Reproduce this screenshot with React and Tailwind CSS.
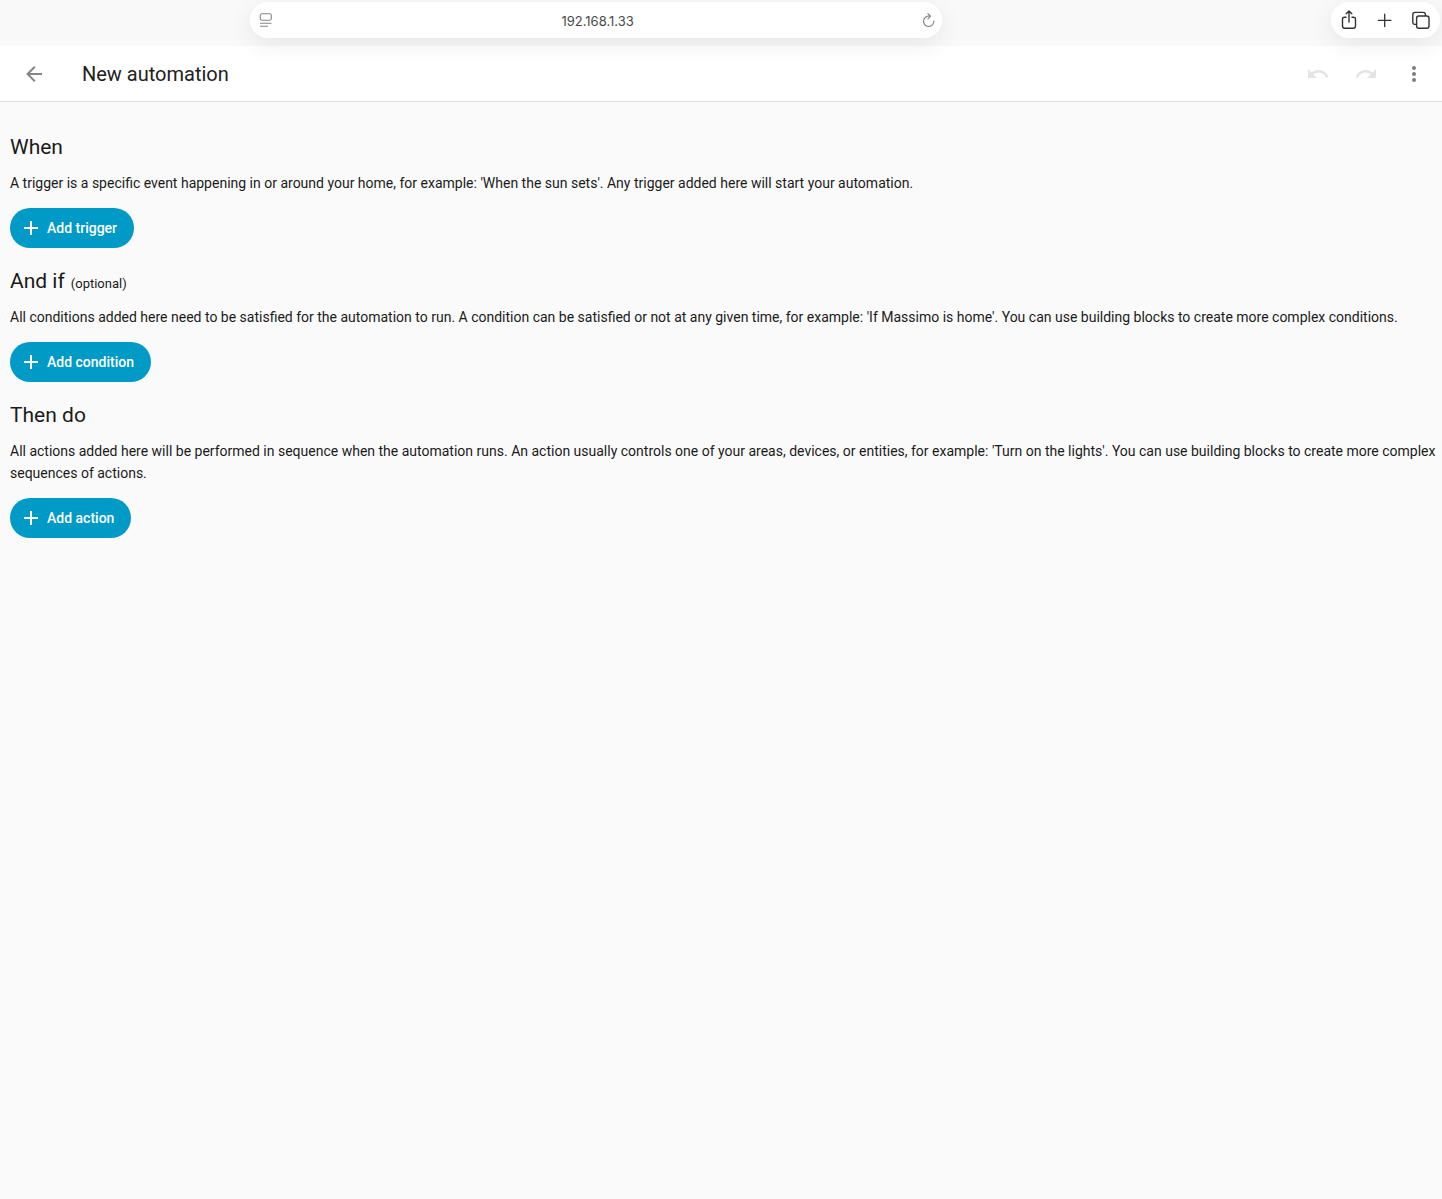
function Mdi({ d }) {
  return (
    <svg viewBox="0 0 24 24" className="size-6" fill="currentColor" aria-hidden="true">
      <path d={d} />
    </svg>
  );
}

const ARROW_LEFT = "M20,11V13H8L13.5,18.5L12.08,19.92L4.16,12L12.08,4.08L13.5,5.5L8,11H20Z";
const UNDO =
  "M12.5,8C9.85,8 7.45,9 5.6,10.6L2,7V16H11L7.38,12.38C8.77,11.22 10.54,10.5 12.5,10.5C16.04,10.5 19.05,12.81 20.1,16L22.47,15.22C21.08,11.03 17.15,8 12.5,8Z";
const REDO =
  "M18.4,10.6C16.55,9 14.15,8 11.5,8C6.85,8 2.92,11.03 1.54,15.22L3.9,16C4.95,12.81 7.95,10.5 11.5,10.5C13.45,10.5 15.23,11.22 16.62,12.38L13,16H22V7L18.4,10.6Z";
const DOTS =
  "M12,16A2,2 0 0,1 14,18A2,2 0 0,1 12,20A2,2 0 0,1 10,18A2,2 0 0,1 12,16M12,10A2,2 0 0,1 14,12A2,2 0 0,1 12,14A2,2 0 0,1 10,12A2,2 0 0,1 12,10M12,4A2,2 0 0,1 14,6A2,2 0 0,1 12,8A2,2 0 0,1 10,6A2,2 0 0,1 12,4Z";
const PLUS = "M19,13H13V19H11V13H5V11H11V5H13V11H19V13Z";

function BrowserBar() {
  return (
    <div className="flex h-[46px] items-start bg-[#f9f9f9] pt-0.5">
      <div className="relative ml-[250px] flex h-9 w-[48%] items-center rounded-full bg-white pr-[5px] pl-2 shadow-[0_6px_24px_rgba(0,0,0,0.08)]">
        <button type="button" aria-label="Page menu" className="text-[#858585]">
          <svg viewBox="0 0 16 16" className="size-4" fill="none" stroke="currentColor" strokeWidth="1.1" strokeLinecap="round">
            <rect x="2.3" y="1.8" width="11" height="6.4" rx="1.6" />
            <path d="M2.5 11.3h10.6M2.5 14.3h7" />
          </svg>
        </button>
        <input
          type="text"
          aria-label="Address"
          defaultValue="192.168.1.33"
          className="h-9 min-w-0 flex-1 bg-transparent pt-0.5 text-center font-['Inter',sans-serif] text-[13px] text-[#4a4a4a] outline-none"
        />
        <button type="button" aria-label="Reload" className="text-[#808080]">
          <svg viewBox="0 0 16 16" className="size-4" fill="none" stroke="currentColor" strokeWidth="1.1" strokeLinecap="round" strokeLinejoin="round">
            <path d="M12.9 9A5.2 5.2 0 1 1 8.9 4.2M6.9 1.6l2.6 2.6-2.6 2.6" />
          </svg>
        </button>
      </div>
      <div className="relative mr-0.5 ml-auto flex h-9 items-center gap-3 rounded-full bg-white pr-[7px] pl-1.5 text-[#333] shadow-[0_6px_24px_rgba(0,0,0,0.08)]">
        <button type="button" aria-label="Share">
          <svg viewBox="0 0 24 24" className="size-6" fill="none" stroke="currentColor" strokeWidth="1.4" strokeLinecap="round" strokeLinejoin="round">
            <path d="M9 9.2H7.6a2.1 2.1 0 0 0-2.1 2.1v6.8a2.1 2.1 0 0 0 2.1 2.1h8.8a2.1 2.1 0 0 0 2.1-2.1v-6.8a2.1 2.1 0 0 0-2.1-2.1H15M12 14V3.2M9.2 5.8 12 3l2.8 2.8" />
          </svg>
        </button>
        <button type="button" aria-label="New tab">
          <svg viewBox="0 0 24 24" className="size-6" fill="none" stroke="currentColor" strokeWidth="1.3" strokeLinecap="round">
            <path d="M11.7 6.2v12.4M5.5 12.4h12.4" />
          </svg>
        </button>
        <button type="button" aria-label="Show tabs">
          <svg viewBox="0 0 24 24" className="size-6" fill="none" stroke="currentColor" strokeWidth="1.4" strokeLinejoin="round">
            <rect x="7.6" y="8" width="12.4" height="12.2" rx="2.2" />
            <path d="M7.6 16.4H6a2.2 2.2 0 0 1-2.2-2.2V6.6A2.2 2.2 0 0 1 6 4.4h8.2a2.2 2.2 0 0 1 2.2 2.2V8" />
          </svg>
        </button>
      </div>
    </div>
  );
}

function AppHeader() {
  return (
    <header className="flex h-14 items-center border-b border-[#e0e0e0] bg-white px-1">
      <button type="button" aria-label="Back" className="mx-1.5 grid size-12 place-items-center text-[#858585]">
        <Mdi d={ARROW_LEFT} />
      </button>
      <h1 className="ml-[18px] flex-1 text-xl text-[#212121]">New automation</h1>
      <button type="button" aria-label="Undo" disabled className="grid size-12 place-items-center text-[#e4e4e4]">
        <Mdi d={UNDO} />
      </button>
      <button type="button" aria-label="Redo" disabled className="grid size-12 place-items-center text-[#e4e4e4]">
        <Mdi d={REDO} />
      </button>
      <button type="button" aria-label="Menu" className="grid size-12 place-items-center text-[#7c7c7c]">
        <Mdi d={DOTS} />
      </button>
    </header>
  );
}

function Section({ title, note, action, children }) {
  return (
    <section>
      <h2 className="text-[21px] leading-7">
        {title}
        {note && <small className="ml-1.5 text-[13px] leading-none">{note}</small>}
      </h2>
      <p className="mt-[11px] text-sm leading-[22px]">{children}</p>
      <button
        type="button"
        className="mt-3.5 flex h-10 items-center gap-1 rounded-full bg-[#009ac7] pr-[17px] pl-[9px] text-sm font-medium text-white"
      >
        <Mdi d={PLUS} />
        {action}
      </button>
    </section>
  );
}

export default function App() {
  return (
    <div className="min-h-screen bg-[#fafafa] font-['Roboto',sans-serif] text-[#1a1a1a]">
      <BrowserBar />
      <AppHeader />
      <main className="flex flex-col gap-[19px] pt-[31px] pr-1.5 pl-2.5">
        <Section title="When" action="Add trigger">
          A trigger is a specific event happening in or around your home, for example: 'When the sun sets'. Any trigger
          added here will start your automation.
        </Section>
        <Section title="And if" note="(optional)" action="Add condition">
          All conditions added here need to be satisfied for the automation to run. A condition can be satisfied or not
          at any given time, for example: 'If Massimo is home'. You can use building blocks to create more complex
          conditions.
        </Section>
        <Section title="Then do" action="Add action">
          All actions added here will be performed in sequence when the automation runs. An action usually controls one
          of your areas, devices, or entities, for example: 'Turn on the lights'. You can use building blocks to create
          more complex sequences of actions.
        </Section>
      </main>
    </div>
  );
}
